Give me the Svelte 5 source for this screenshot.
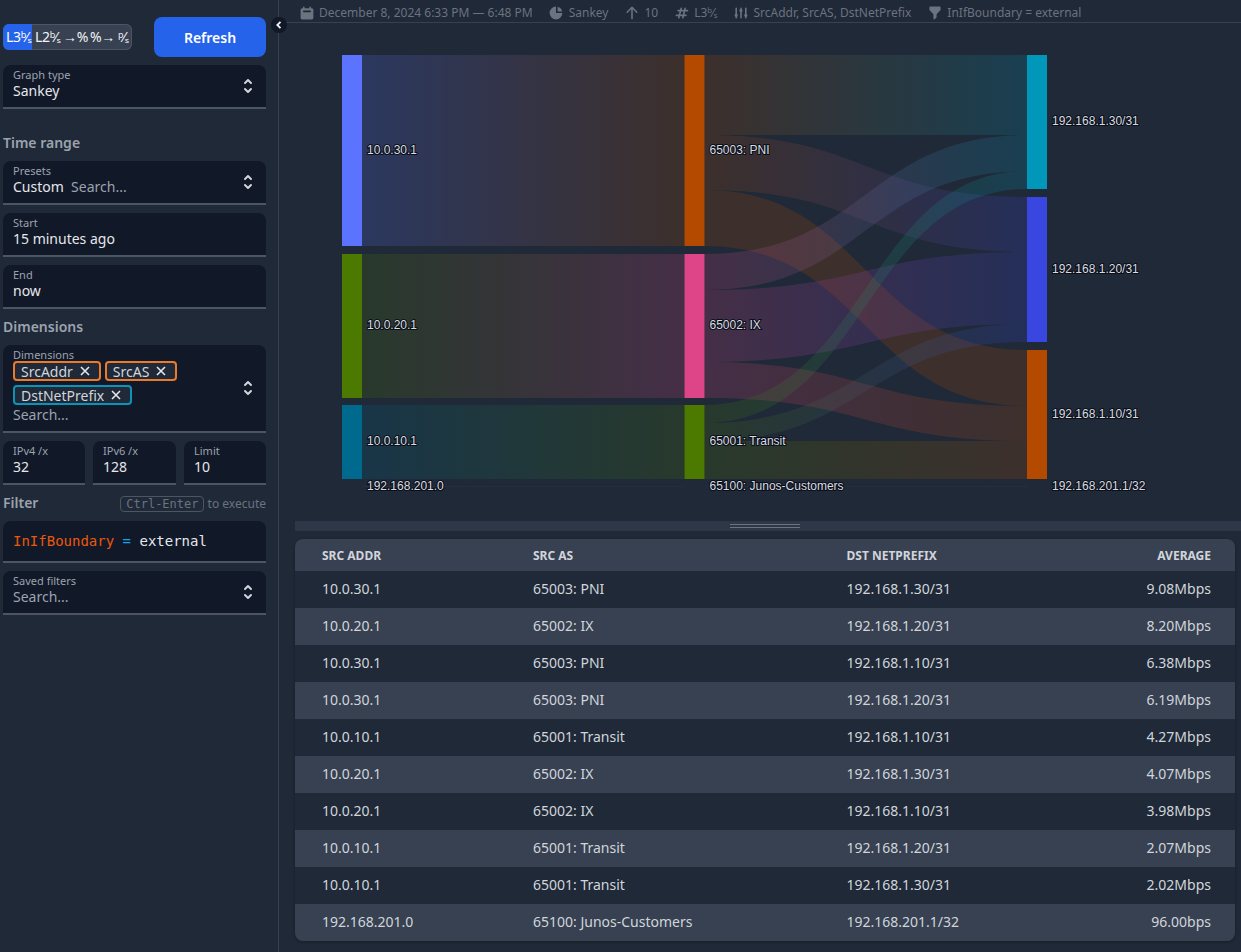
<script>
  const units = [
    { label: "L3ᵇ⁄ₛ", width: 29, active: true },
    { label: "L2ᵇ⁄ₛ", width: 28 },
    { label: "→%", width: 27 },
    { label: "%→", width: 28 },
    { label: "ᵖ⁄ₛ", width: 17 },
  ];

  const icons = {
    calendar:
      "M6 2a1 1 0 00-1 1v1H4a2 2 0 00-2 2v10a2 2 0 002 2h12a2 2 0 002-2V6a2 2 0 00-2-2h-1V3a1 1 0 10-2 0v1H7V3a1 1 0 00-1-1zm0 5a1 1 0 000 2h8a1 1 0 100-2H6z",
    pie: "M2 10a8 8 0 018-8v8h8a8 8 0 11-16 0zM12 2.252A8.014 8.014 0 0117.748 8H12V2.252z",
    up: "M3.293 9.707a1 1 0 010-1.414l6-6a1 1 0 011.414 0l6 6a1 1 0 01-1.414 1.414L11 5.414V17a1 1 0 11-2 0V5.414L4.707 9.707a1 1 0 01-1.414 0z",
    hash: "M9.243 3.03a1 1 0 01.727 1.213L9.53 6h2.94l.56-2.243a1 1 0 111.94.486L14.53 6H17a1 1 0 110 2h-2.97l-1 4H15a1 1 0 110 2h-2.47l-.56 2.242a1 1 0 11-1.94-.485L10.47 14H7.53l-.56 2.242a1 1 0 11-1.94-.485L5.47 14H3a1 1 0 110-2h2.97l1-4H5a1 1 0 110-2h2.47l.56-2.243a1 1 0 011.213-.727zM9.03 8l-1 4h2.938l1-4H9.031z",
    sliders:
      "M5 4a1 1 0 00-2 0v7.268a2 2 0 000 3.464V16a1 1 0 102 0v-1.268a2 2 0 000-3.464V4zM11 4a1 1 0 10-2 0v1.268a2 2 0 000 3.464V16a1 1 0 102 0V8.732a2 2 0 000-3.464V4zM16 3a1 1 0 011 1v7.268a2 2 0 010 3.464V16a1 1 0 11-2 0v-1.268a2 2 0 010-3.464V4a1 1 0 011-1z",
    filter:
      "M3 3a1 1 0 011-1h12a1 1 0 011 1v3a1 1 0 01-.293.707L12 11.414V15a1 1 0 01-.293.707l-2 2A1 1 0 018 17v-5.586L3.293 6.707A1 1 0 013 6V3z",
  };
  const selector =
    "M10 3a1 1 0 01.707.293l3 3a1 1 0 01-1.414 1.414L10 5.414 7.707 7.707a1 1 0 01-1.414-1.414l3-3A1 1 0 0110 3zm-3.707 9.293a1 1 0 011.414 0L10 14.586l2.293-2.293a1 1 0 011.414 1.414l-3 3a1 1 0 01-1.414 0l-3-3a1 1 0 010-1.414z";

  const summary = [
    { icon: "calendar", text: "December 8, 2024 6:33 PM — 6:48 PM" },
    { icon: "pie", text: "Sankey" },
    { icon: "up", text: "10" },
    { icon: "hash", text: "L3ᵇ⁄ₛ" },
    { icon: "sliders", text: "SrcAddr, SrcAS, DstNetPrefix" },
    { icon: "filter", text: "InIfBoundary = external" },
  ];

  // sankey nodes: x, top, bottom. The last row of each column is too small to show a bar
  const nodes = {
    a30: { name: "10.0.30.1", x: 342, y0: 55, y1: 246, color: "#5c73ff" },
    a20: { name: "10.0.20.1", x: 342, y0: 254, y1: 398, color: "#4c7a00" },
    a10: { name: "10.0.10.1", x: 342, y0: 405, y1: 479, color: "#006a8e" },
    a201: { name: "192.168.201.0", x: 342, y0: 487, y1: 487, color: "#c2386b" },
    pni: { name: "65003: PNI", x: 684.5, y0: 55, y1: 246, color: "#b34a00" },
    ix: { name: "65002: IX", x: 684.5, y0: 254, y1: 398, color: "#de4488" },
    transit: { name: "65001: Transit", x: 684.5, y0: 405, y1: 479, color: "#4c7a00" },
    junos: { name: "65100: Junos-Customers", x: 684.5, y0: 487, y1: 487, color: "#3a46e0" },
    p30: { name: "192.168.1.30/31", x: 1027, y0: 55, y1: 189, color: "#0097bb" },
    p20: { name: "192.168.1.20/31", x: 1027, y0: 197, y1: 342, color: "#3a46e0" },
    p10: { name: "192.168.1.10/31", x: 1027, y0: 350, y1: 479, color: "#b34a00" },
    p201: { name: "192.168.201.1/32", x: 1027, y0: 487, y1: 487, color: "#4c7a00" },
  };

  // links: source, target, band at source, band at target
  const links = [
    ["a30", "pni", 55, 246, 55, 246],
    ["a20", "ix", 254, 398, 254, 398],
    ["a10", "transit", 405, 479, 405, 479],
    ["a201", "junos", 486.6, 487, 486.6, 487],
    ["pni", "p30", 55, 135, 55, 135],
    ["pni", "p20", 135, 190, 197, 252],
    ["pni", "p10", 190, 246, 350, 406],
    ["ix", "p30", 254, 290, 135, 171],
    ["ix", "p20", 290, 362, 252, 324],
    ["ix", "p10", 362, 398, 406, 441],
    ["transit", "p30", 405, 423, 171, 189],
    ["transit", "p20", 423, 441, 324, 342],
    ["transit", "p10", 441, 479, 441, 479],
    ["junos", "p201", 486.6, 487, 486.6, 487],
  ].map(([s, t, a0, a1, b0, b1], id) => {
    const x0 = nodes[s].x + 20;
    const x1 = nodes[t].x;
    const m = (x0 + x1) / 2;
    return {
      id,
      x0,
      x1,
      from: nodes[s].color,
      to: nodes[t].color,
      d: `M${x0},${a0} C${m},${a0} ${m},${b0} ${x1},${b0} L${x1},${b1} C${m},${b1} ${m},${a1} ${x0},${a1} Z`,
    };
  });

  const rows = [
    ["10.0.30.1", "65003: PNI", "192.168.1.30/31", "9.08Mbps"],
    ["10.0.20.1", "65002: IX", "192.168.1.20/31", "8.20Mbps"],
    ["10.0.30.1", "65003: PNI", "192.168.1.10/31", "6.38Mbps"],
    ["10.0.30.1", "65003: PNI", "192.168.1.20/31", "6.19Mbps"],
    ["10.0.10.1", "65001: Transit", "192.168.1.10/31", "4.27Mbps"],
    ["10.0.20.1", "65002: IX", "192.168.1.30/31", "4.07Mbps"],
    ["10.0.20.1", "65002: IX", "192.168.1.10/31", "3.98Mbps"],
    ["10.0.10.1", "65001: Transit", "192.168.1.20/31", "2.07Mbps"],
    ["10.0.10.1", "65001: Transit", "192.168.1.30/31", "2.02Mbps"],
    ["192.168.201.0", "65100: Junos-Customers", "192.168.201.1/32", "96.00bps"],
  ];
</script>

{#snippet chevrons()}
  <svg class="selector" viewBox="0 0 20 20" fill="currentColor"><path d={selector} /></svg>
{/snippet}

{#snippet tag(label, kind)}
  <span class="tag {kind}">
    {label}
    <svg viewBox="0 0 12 12" fill="none" stroke="currentColor" stroke-width="1.6"><path d="M2 2l8 8M10 2l-8 8" /></svg>
  </span>
{/snippet}

<div class="page">
  <aside class="sidebar">
    <div class="top">
      <div class="units">
        {#each units as unit}
          <span class:active={unit.active} style="width: {unit.width}px">{unit.label}</span>
        {/each}
      </div>
      <button class="refresh">Refresh</button>
    </div>

    <div class="field select">
      <div>
        <div class="label">Graph type</div>
        <div class="value">Sankey</div>
      </div>
      {@render chevrons()}
    </div>

    <h3 class="first">Time range</h3>
    <div class="field select">
      <div>
        <div class="label">Presets</div>
        <div class="value">Custom <span class="hint">&nbsp;Search...</span></div>
      </div>
      {@render chevrons()}
    </div>
    <div class="field">
      <div class="label">Start</div>
      <div class="value">15 minutes ago</div>
    </div>
    <div class="field">
      <div class="label">End</div>
      <div class="value">now</div>
    </div>

    <h3>Dimensions</h3>
    <div class="field select">
      <div>
        <div class="label">Dimensions</div>
        <div class="tags">
          {@render tag("SrcAddr", "orange")}
          {@render tag("SrcAS", "orange")}
          {@render tag("DstNetPrefix", "cyan")}
        </div>
        <div class="value hint">Search...</div>
      </div>
      {@render chevrons()}
    </div>
    <div class="triple">
      <div class="field">
        <div class="label">IPv4 /x</div>
        <div class="value">32</div>
      </div>
      <div class="field">
        <div class="label">IPv6 /x</div>
        <div class="value">128</div>
      </div>
      <div class="field">
        <div class="label">Limit</div>
        <div class="value">10</div>
      </div>
    </div>

    <div class="filter-head">
      <h3>Filter</h3>
      <span class="exec"><kbd>Ctrl-Enter</kbd> to execute</span>
    </div>
    <div class="editor">
      <span class="column">InIfBoundary</span> <span class="op">=</span> external
    </div>
    <div class="field select">
      <div>
        <div class="label">Saved filters</div>
        <div class="value hint">Search...</div>
      </div>
      {@render chevrons()}
    </div>

    <button class="collapse" aria-label="Collapse">
      <svg viewBox="0 0 10 10" fill="none" stroke="currentColor" stroke-width="1.8"><path d="M6.5 1.8L3.3 5l3.2 3.2" /></svg>
    </button>
  </aside>

  <main class="main">
    <div class="summary">
      {#each summary as item}
        <span class="item">
          <svg viewBox="0 0 20 20" fill="currentColor"><path fill-rule="evenodd" clip-rule="evenodd" d={icons[item.icon]} /></svg>
          {item.text}
        </span>
      {/each}
    </div>

    <svg class="chart" viewBox="279 23 962 498" width="962" height="498">
      <defs>
        {#each links as link}
          <linearGradient id="link{link.id}" gradientUnits="userSpaceOnUse" x1={link.x0} y1="0" x2={link.x1} y2="0">
            <stop offset="0" stop-color={link.from} />
            <stop offset="1" stop-color={link.to} />
          </linearGradient>
        {/each}
      </defs>
      {#each links as link}
        <path d={link.d} fill="url(#link{link.id})" fill-opacity="0.2" />
      {/each}
      {#each Object.values(nodes) as node}
        <rect x={node.x} y={node.y0} width="20" height={node.y1 - node.y0} fill={node.color} />
        <text class="node-label" x={node.x + 25} y={(node.y0 + node.y1) / 2 + 3}>{node.name}</text>
      {/each}
    </svg>

    <div class="resizer"><span></span></div>

    <div class="table-wrap">
      <table>
        <colgroup>
          <col style="width: 211px" />
          <col style="width: 313.5px" />
          <col />
          <col style="width: 120px" />
        </colgroup>
        <thead>
          <tr>
            <th>Src Addr</th>
            <th>Src AS</th>
            <th>Dst NetPrefix</th>
            <th class="num">Average</th>
          </tr>
        </thead>
        <tbody>
          {#each rows as row}
            <tr>
              <td>{row[0]}</td>
              <td>{row[1]}</td>
              <td>{row[2]}</td>
              <td class="num">{row[3]}</td>
            </tr>
          {/each}
        </tbody>
      </table>
    </div>
  </main>
</div>

<style>
  :global(body) {
    background: #1f2937;
    font-family: "Noto Sans", sans-serif;
    color: #e5e7eb;
  }
  .page {
    display: flex;
    height: 952px;
    overflow: hidden;
    background: #1f2937;
  }
  .sidebar {
    position: relative;
    box-sizing: border-box;
    width: 279px;
    flex: none;
    display: flex;
    flex-direction: column;
    gap: 8px;
    padding: 17px 12px 0 3px;
    border-right: 1px solid #374151;
  }
  .top {
    display: flex;
    justify-content: space-between;
    align-items: center;
    height: 40px;
  }
  .units {
    display: flex;
    width: 129px;
    height: 26px;
    border-radius: 6px;
    overflow: hidden;
    background: #374151;
    box-shadow: 0 0 0 1px #4b5563 inset;
    font-size: 14px;
    line-height: 26px;
    letter-spacing: -0.3px;
    color: #f3f4f6;
  }
  .units span {
    box-sizing: border-box;
    flex: none;
    padding-left: 3px;
    white-space: nowrap;
  }
  .units span.active {
    background: #2563eb;
    color: #fff;
  }
  .refresh {
    width: 112px;
    height: 40px;
    border: none;
    border-radius: 8px;
    background: #2563eb;
    color: #fff;
    font: 600 14px "Noto Sans", sans-serif;
  }
  .collapse {
    position: absolute;
    left: 271px;
    top: 17px;
    width: 16px;
    height: 16px;
    padding: 3px;
    border: none;
    border-radius: 50%;
    background: #111827;
    color: #f3f4f6;
  }
  .collapse svg {
    display: block;
  }
  h3 {
    margin: 0;
    font-size: 14px;
    line-height: 20px;
    font-weight: 600;
    color: #9ca3af;
  }
  h3.first {
    margin-top: 16px;
  }
  .field {
    box-sizing: border-box;
    padding: 4px 10px 6px;
    background: #111827;
    border-bottom: 2px solid #4b5563;
    border-radius: 8px 8px 0 0;
  }
  .select {
    display: flex;
    justify-content: space-between;
    align-items: center;
    padding-right: 8px;
  }
  .label {
    font-size: 11px;
    line-height: 12px;
    color: #9ca3af;
  }
  .value {
    font-size: 14px;
    line-height: 20px;
    color: #e5e7eb;
  }
  .hint {
    color: #9ca3af;
  }
  .selector {
    width: 20px;
    height: 20px;
    color: #d1d5db;
    margin-top: 2px;
  }
  .tags {
    display: flex;
    flex-wrap: wrap;
    gap: 4px;
    width: 210px;
  }
  .tag {
    box-sizing: border-box;
    display: inline-flex;
    align-items: center;
    gap: 6px;
    height: 20px;
    padding: 0 8px 0 6px;
    border: 2px solid;
    border-radius: 4px;
    font-size: 14px;
    color: #d1d5db;
    background: #1f2937;
  }
  .tag svg {
    width: 12px;
    height: 12px;
    color: #e5e7eb;
  }
  .orange {
    border-color: #ea7a2c;
  }
  .cyan {
    border-color: #0e93b8;
  }
  .triple {
    display: grid;
    grid-template-columns: 82px 83px 82px;
    gap: 8px;
  }
  .filter-head {
    display: flex;
    justify-content: space-between;
    align-items: center;
    height: 20px;
  }
  .exec {
    font-size: 12px;
    color: #6b7280;
  }
  kbd {
    font: 12px "DejaVu Sans Mono", monospace;
    padding: 0 5px;
    border: 1px solid #4b5563;
    border-radius: 4px;
  }
  .editor {
    box-sizing: border-box;
    height: 42px;
    padding: 10px 10px 0;
    background: #111827;
    border-bottom: 2px solid #4b5563;
    border-radius: 8px 8px 0 0;
    font: 14px/20px "DejaVu Sans Mono", monospace;
    color: #e5e7eb;
  }
  .column {
    color: #ea580c;
  }
  .op {
    color: #0ea5e9;
  }
  .main {
    flex: 1;
    min-width: 0;
    display: flex;
    flex-direction: column;
  }
  .summary {
    box-sizing: border-box;
    height: 23px;
    display: flex;
    gap: 15.5px;
    padding: 3px 0 0 19.5px;
    border-bottom: 1px solid #374151;
    font-size: 12px;
    line-height: 18px;
    color: #6b7280;
  }
  .item {
    display: inline-flex;
    align-items: center;
    gap: 4.5px;
    white-space: nowrap;
  }
  .item svg {
    width: 16px;
    height: 16px;
  }
  .chart {
    display: block;
    flex: none;
  }
  .node-label {
    font: 12px "Liberation Sans", sans-serif;
    fill: #d8dce2;
    stroke: #0b0f17;
    stroke-width: 2px;
    paint-order: stroke;
  }
  .resizer {
    height: 10px;
    margin-left: 16px;
    background: #2d3748;
    display: flex;
    justify-content: center;
    padding-right: 6px;
    flex: none;
  }
  .resizer span {
    width: 70px;
    height: 2px;
    margin-top: 3px;
    border-top: 1px solid #6b7280;
    border-bottom: 1px solid #6b7280;
    box-sizing: content-box;
  }
  .table-wrap {
    margin: 8px 6px 0 16px;
    border-radius: 8px;
    overflow: hidden;
    box-shadow: 0 1px 3px #0000004d;
    flex: none;
  }
  table {
    width: 100%;
    border-collapse: collapse;
    table-layout: fixed;
    font-size: 14px;
  }
  th {
    height: 32px;
    padding: 0 0 0 27px;
    text-align: left;
    background: #374151;
    font-size: 12px;
    font-weight: 700;
    text-transform: uppercase;
    color: #d1d5db;
  }
  td {
    box-sizing: border-box;
    height: 37px;
    padding: 0 0 2px 27px;
    color: #d1d5db;
  }
  tbody tr:nth-child(even) {
    background: #374151;
  }
  th.num,
  td.num {
    text-align: right;
    padding: 0 24px 0 0;
  }
  td.num {
    padding-bottom: 2px;
  }
</style>
